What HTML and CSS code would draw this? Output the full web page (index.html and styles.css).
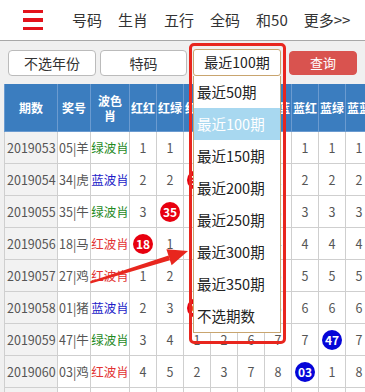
FILE: index.html
```html
<!DOCTYPE html>
<html lang="zh-CN">
<head>
  <meta charset="UTF-8">
  <meta name="viewport" content="width=device-width, initial-scale=1.0">
  <title>波色肖 - 最近100期</title>
  <link rel="stylesheet" href="styles.css">
</head>
<body>
  <div class="page">
    <!-- Top navigation -->
    <header class="topbar">
      <span class="menu-icon"><i></i><i></i><i></i></span>
      <nav class="nav">
        <a href="#">号码</a>
        <a href="#">生肖</a>
        <a href="#">五行</a>
        <a href="#">全码</a>
        <a href="#">和50</a>
        <a href="#">更多&gt;&gt;</a>
      </nav>
    </header>

    <!-- Filters -->
    <div class="toolbar">
      <button class="btn btn-year">不选年份</button>
      <button class="btn btn-type">特码</button>
      <div class="picker">
        <div class="picker-value">最近100期</div>
        <ul class="picker-list">
          <li>最近50期</li>
          <li class="active">最近100期</li>
          <li>最近150期</li>
          <li>最近200期</li>
          <li>最近250期</li>
          <li>最近300期</li>
          <li>最近350期</li>
          <li>不选期数</li>
        </ul>
      </div>
      <button class="btn btn-query">查询</button>
    </div>

    <!-- Results table -->
    <div class="table-wrap">
      <table class="data">
        <colgroup>
          <col class="c-issue"><col class="c-num"><col class="c-wave">
          <col class="c-n"><col class="c-n"><col class="c-n"><col class="c-n"><col class="c-n">
          <col class="c-n"><col class="c-n"><col class="c-n"><col class="c-n">
        </colgroup>
        <thead>
          <tr>
            <th>期数</th><th>奖号</th><th class="wrap">波色肖</th>
            <th>红红</th><th>红绿</th><th>红蓝</th><th>绿红</th><th>绿绿</th>
            <th>绿蓝</th><th>蓝红</th><th>蓝绿</th><th>蓝蓝</th>
          </tr>
        </thead>
        <tbody>
          <tr>
            <td class="issue">2019053</td><td>05|羊</td><td class="green">绿波肖</td>
            <td>1</td><td>1</td><td>6</td><td>2</td><td><span class="ball g">29</span></td>
            <td>1</td><td>1</td><td>1</td><td>1</td>
          </tr>
          <tr>
            <td class="issue">2019054</td><td>34|虎</td><td class="blue">蓝波肖</td>
            <td>2</td><td>2</td><td><span class="ball r">34</span></td><td>3</td><td>1</td>
            <td>2</td><td>2</td><td>2</td><td>2</td>
          </tr>
          <tr>
            <td class="issue">2019055</td><td>35|牛</td><td class="green">绿波肖</td>
            <td>3</td><td><span class="ball r">35</span></td><td>1</td><td>4</td><td>2</td>
            <td>3</td><td>3</td><td>3</td><td>3</td>
          </tr>
          <tr>
            <td class="issue">2019056</td><td>18|马</td><td class="red">红波肖</td>
            <td><span class="ball r">18</span></td><td>1</td><td>2</td><td>5</td><td>3</td>
            <td>4</td><td>4</td><td>4</td><td>4</td>
          </tr>
          <tr>
            <td class="issue">2019057</td><td>27|鸡</td><td class="red">红波肖</td>
            <td>1</td><td>2</td><td>3</td><td><span class="ball g">27</span></td><td>4</td>
            <td>5</td><td>5</td><td>5</td><td>5</td>
          </tr>
          <tr>
            <td class="issue">2019058</td><td>01|猪</td><td class="blue">蓝波肖</td>
            <td>2</td><td>3</td><td><span class="ball r">01</span></td><td>1</td><td>5</td>
            <td>6</td><td>6</td><td>6</td><td>6</td>
          </tr>
          <tr>
            <td class="issue">2019059</td><td>47|牛</td><td class="green">绿波肖</td>
            <td>3</td><td>4</td><td>1</td><td>2</td><td>6</td>
            <td>7</td><td>7</td><td><span class="ball b">47</span></td><td>7</td>
          </tr>
          <tr>
            <td class="issue">2019060</td><td>03|鸡</td><td class="red">红波肖</td>
            <td>4</td><td>5</td><td>2</td><td>3</td><td>7</td>
            <td>8</td><td><span class="ball b">03</span></td><td>1</td><td>8</td>
          </tr>
          <tr>
            <td class="issue">2019061</td><td>12|蛇</td><td class="red">红波肖</td>
            <td>5</td><td>6</td><td>3</td><td>4</td><td>8</td>
            <td>9</td><td>1</td><td>2</td><td>9</td>
          </tr>
        </tbody>
      </table>
    </div>

    <!-- Annotation overlay -->
    <div class="mark-box"></div>
    <svg class="mark-arrow" width="365" height="392" viewBox="0 0 365 392">
      <polygon points="90,281.5 90.6,283.4 170,260.2 168.5,255.4" fill="#e8261e"/>
      <polygon points="188,251 166.4,249.2 171.6,265.2" fill="#e8261e"/>
    </svg>
  </div>
</body>
</html>
```

FILE: styles.css
```css
body {
  margin: 0;
  padding: 0;
  background-color: #f0f0f0;
  font-family: "Noto Sans CJK SC", "Liberation Sans", sans-serif;
  color: #333;
  overflow: hidden;
}
.page {
  position: relative;
  width: 365px;
  height: 392px;
  overflow: hidden;
}

/* top bar */
.topbar {
  display: flex;
  align-items: center;
  height: 40px;
  background: #fff;
  border-bottom: 1px solid #a8a8a8;
}
.menu-icon {
  display: flex;
  flex-direction: column;
  gap: 5px;
  width: 20px;
  margin: 0 29px 0 23px;
}
.menu-icon i {
  display: block;
  height: 3.5px;
  background: #e3131b;
}
.nav {
  display: flex;
  gap: 16px;
}
.nav a {
  color: #333;
  font-size: 15px;
  text-decoration: none;
  line-height: 40px;
}

/* filters */
.toolbar {
  display: flex;
  align-items: center;
  height: 43px;
  padding: 0 0 0 8px;
}
.btn {
  height: 26px;
  padding: 0;
  background: #fff;
  border: 1px solid #bbb;
  border-radius: 4px;
  font-family: inherit;
  font-size: 14px;
  color: #333;
}
.btn-year {
  width: 88px;
}
.btn-type {
  width: 87px;
  margin-left: 4px;
}
.btn-query {
  width: 68px;
  height: 24px;
  margin-left: 8px;
  background: #d9534f;
  border-color: #d9534f;
  color: #fff;
  font-size: 13px;
}
.picker {
  position: relative;
  width: 88px;
  margin-left: 6px;
}
.picker-value {
  box-sizing: border-box;
  height: 27px;
  line-height: 25px;
  text-align: center;
  font-size: 14px;
  color: #222;
  background: #fff;
  border: 1px solid #c9a56f;
  border-radius: 3px;
}
.picker-list {
  position: absolute;
  top: 27px;
  left: 0;
  z-index: 5;
  box-sizing: border-box;
  width: 88px;
  margin: 0;
  padding: 0;
  list-style: none;
  background: #fff;
  border: 1px solid #c9a56f;
  border-top: none;
}
.picker-list li {
  height: 32px;
  line-height: 32px;
  padding-left: 3px;
  font-size: 14.5px;
  color: #222;
  white-space: nowrap;
}
.picker-list li.active {
  background: #a8d8f0;
  color: #fff;
}

/* table */
.table-wrap {
  padding-left: 4px;
}
.data {
  table-layout: fixed;
  width: 368px;
  border-collapse: collapse;
  font-size: 12.5px;
}
.c-issue { width: 53px; }
.c-num { width: 33px; }
.c-wave { width: 39px; }
.c-n { width: 27px; }
.data th {
  height: 47px;
  padding: 0;
  background: #3b7dbf;
  color: #fff;
  font-weight: bold;
  font-size: 12px;
  line-height: 15px;
  white-space: nowrap;
  overflow: hidden;
  border: 1px solid #6b9bd0;
  border-top: none;
}
.data th.wrap {
  white-space: normal;
  padding: 0 3px;
}
.data td {
  height: 31px;
  padding: 0;
  text-align: center;
  color: #555;
  background: #fff;
  border: 1px solid #cfcfcf;
  white-space: nowrap;
  overflow: hidden;
}
.data td.issue {
  background: #f2f2f2;
  text-align: left;
  padding-left: 2px;
}
.data td.green { color: #1f8a1f; }
.data td.blue { color: #1c1cc8; }
.data td.red { color: #e23232; }
.ball {
  display: inline-block;
  width: 20px;
  height: 20px;
  line-height: 20px;
  border-radius: 50%;
  color: #fff;
  font-weight: bold;
  font-size: 12px;
  text-align: center;
}
.ball.r { background: #e8000f; }
.ball.b { background: #0505d8; }
.ball.g { background: #1a9a2a; }

/* annotation */
.mark-box {
  position: absolute;
  left: 189px;
  top: 43px;
  width: 91px;
  height: 295px;
  border: 3px solid #e8261e;
  border-radius: 5px;
  z-index: 8;
}
.mark-arrow {
  position: absolute;
  left: 0;
  top: 0;
  z-index: 9;
}
```
